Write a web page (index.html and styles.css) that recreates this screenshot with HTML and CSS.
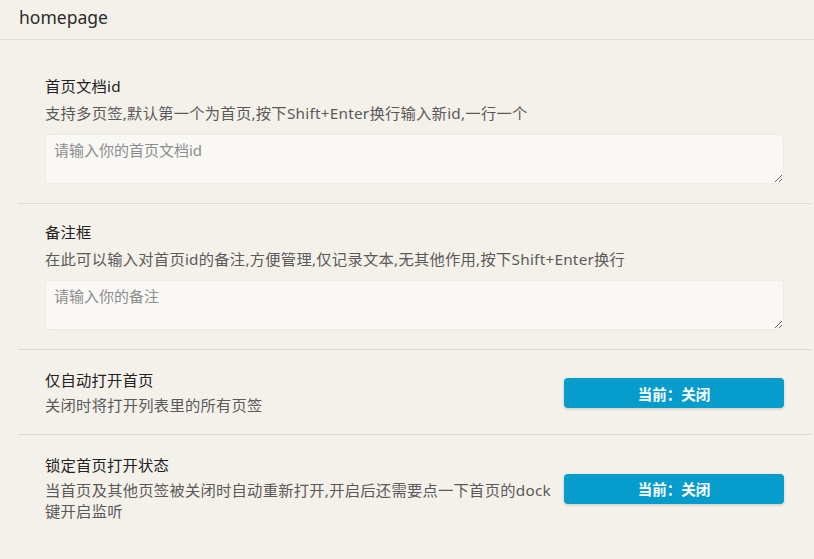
FILE: index.html
```html
<!DOCTYPE html>
<html lang="zh-CN">
<head>
<meta charset="utf-8">
<title>homepage</title>
<link rel="stylesheet" href="styles.css">
</head>
<body>
<header class="dialog-header">homepage</header>
<main class="dialog-body">
  <section class="item">
    <div class="item-title">首页文档id</div>
    <div class="item-desc">支持多页签,默认第一个为首页,按下Shift+Enter换行输入新id,一行一个</div>
    <textarea class="item-input" placeholder="请输入你的首页文档id"></textarea>
  </section>
  <section class="item">
    <div class="item-title">备注框</div>
    <div class="item-desc">在此可以输入对首页id的备注,方便管理,仅记录文本,无其他作用,按下Shift+Enter换行</div>
    <textarea class="item-input" placeholder="请输入你的备注"></textarea>
  </section>
  <section class="item item-row">
    <div class="item-text">
      <div class="item-title">仅自动打开首页</div>
      <div class="item-desc">关闭时将打开列表里的所有页签</div>
    </div>
    <button class="toggle-btn">当前：关闭</button>
  </section>
  <section class="item item-row">
    <div class="item-text">
      <div class="item-title">锁定首页打开状态</div>
      <div class="item-desc">当首页及其他页签被关闭时自动重新打开,开启后还需要点一下首页的dock键开启监听</div>
    </div>
    <button class="toggle-btn">当前：关闭</button>
  </section>
</main>
</body>
</html>
```
FILE: styles.css
```css
html, body {
  margin: 0;
  padding: 0;
  background: #f4f1eb;
  font-family: "Noto Sans", "Noto Sans CJK SC", sans-serif;
  height: 100%;
  overflow: hidden;
}

.dialog-header {
  height: 39px;
  line-height: 34px;
  padding: 0 19px;
  font-size: 17.5px;
  color: #2b2b2b;
  border-bottom: 1px solid #dfe0df;
}

.dialog-body {
  padding: 18px 3px 0 18px;
}

.item {
  padding: 18px 27px 19px;
  border-bottom: 1px solid #dcd9d3;
  display: flex;
  flex-direction: column;
}

.item:last-child {
  border-bottom: none;
}

.item-row {
  flex-direction: row;
  align-items: center;
  gap: 10px;
  padding-top: 20px;
  padding-bottom: 18px;
}

.item-row .item-desc {
  margin-top: 4px;
}

.item-text {
  flex: 1;
  min-width: 0;
}

.item-title {
  font-size: 15.3px;
  line-height: 21px;
  letter-spacing: 0.2px;
  color: #222222;
}

.item-desc {
  margin-top: 6px;
  font-size: 15.3px;
  line-height: 21px;
  letter-spacing: 0.25px;
  color: #5a5a5a;
}

.item-input {
  margin-top: 10px;
  height: 50px;
  box-sizing: border-box;
  padding: 4px 8px;
  border: 1px solid #efece6;
  border-radius: 4px;
  background: #f9f8f5;
  font-family: "Noto Sans", "Noto Sans CJK SC", sans-serif;
  font-size: 15px;
  color: #333;
  outline: none;
}

.item-input::placeholder {
  color: #8d8d8d;
}

.toggle-btn {
  width: 220px;
  height: 30px;
  flex: none;
  border: none;
  border-radius: 4px;
  background: #069dcc;
  color: #ffffff;
  font-family: "Noto Sans", "Noto Sans CJK SC", sans-serif;
  font-size: 14.5px;
  font-weight: 700;
  box-shadow: 0 1px 3px rgba(0, 0, 0, 0.18);
  cursor: pointer;
}
```
